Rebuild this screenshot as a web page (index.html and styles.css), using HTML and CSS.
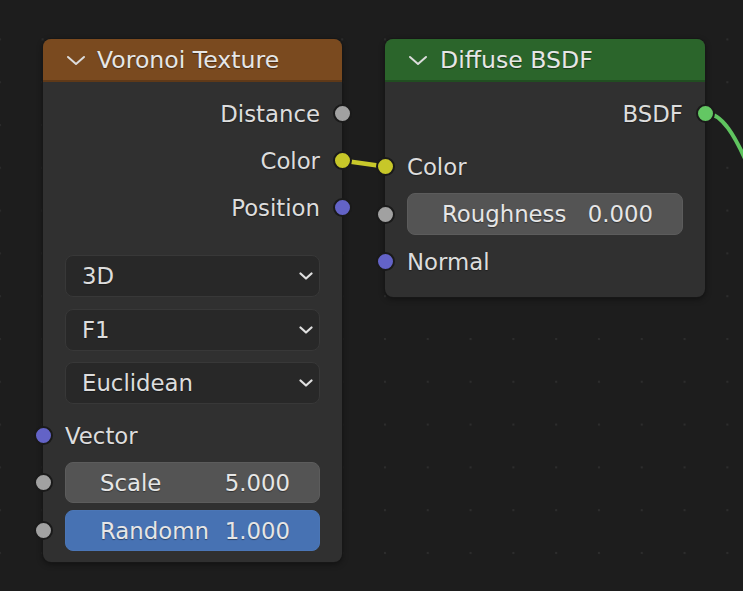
FILE: index.html
```html
<!DOCTYPE html>
<html lang="en">
<head>
<meta charset="utf-8">
<title>Node Editor</title>
<link rel="stylesheet" href="styles.css">
</head>
<body>
<div class="canvas">
  <svg class="links" width="743" height="591" viewBox="0 0 743 591">
    <path d="M342 160.5 L385 166.5" stroke="#c9c92b" stroke-width="4.5" fill="none"/>
    <path d="M705 113 C722 113 735 135 750 170" stroke="#5fc45f" stroke-width="4" fill="none"/>
  </svg>

  <div class="node node-voronoi">
    <div class="node-header header-texture">
      <svg class="hchev" width="20" height="11" viewBox="0 0 20 11"><path d="M2 2 L10 9 L18 2" /></svg>
      <span class="title">Voronoi Texture</span>
    </div>
    <div class="node-body">
      <div class="row out"><span>Distance</span><i class="socket s-float"></i></div>
      <div class="row out"><span>Color</span><i class="socket s-color"></i></div>
      <div class="row out"><span>Position</span><i class="socket s-vector"></i></div>

      <div class="dropdowns">
        <div class="dropdown"><span>3D</span><svg class="dchev" width="14" height="8" viewBox="0 0 14 8"><path d="M1.5 1.5 L7 6.5 L12.5 1.5"/></svg></div>
        <div class="dropdown"><span>F1</span><svg class="dchev" width="14" height="8" viewBox="0 0 14 8"><path d="M1.5 1.5 L7 6.5 L12.5 1.5"/></svg></div>
        <div class="dropdown"><span>Euclidean</span><svg class="dchev" width="14" height="8" viewBox="0 0 14 8"><path d="M1.5 1.5 L7 6.5 L12.5 1.5"/></svg></div>
      </div>

      <div class="row in vector-row"><i class="socket s-vector"></i><span>Vector</span></div>
      <div class="field-row first-field"><i class="socket s-float"></i><div class="field"><span>Scale</span><span>5.000</span></div></div>
      <div class="field-row second-field"><i class="socket s-float"></i><div class="field active"><span>Randomn</span><span>1.000</span></div></div>
    </div>
  </div>

  <div class="node node-diffuse">
    <div class="node-header header-shader">
      <svg class="hchev" width="20" height="11" viewBox="0 0 20 11"><path d="M2 2 L10 9 L18 2" /></svg>
      <span class="title">Diffuse BSDF</span>
    </div>
    <div class="node-body">
      <div class="row out"><span>BSDF</span><i class="socket s-shader"></i></div>
      <div class="row in color-in"><i class="socket s-color"></i><span>Color</span></div>
      <div class="field-row rough-field"><i class="socket s-float"></i><div class="field"><span>Roughness</span><span>0.000</span></div></div>
      <div class="row in normal-row"><i class="socket s-vector"></i><span>Normal</span></div>
    </div>
  </div>
</div>
</body>
</html>
```

FILE: styles.css
```css
html, body {
  margin: 0;
  padding: 0;
  background: #1d1d1d;
}

.canvas {
  position: relative;
  width: 743px;
  height: 591px;
  overflow: hidden;
  background-color: #1d1d1d;
  background-image: radial-gradient(circle at 1px 1px, #2d2d2d 0, #2d2d2d 1.1px, transparent 1.6px);
  background-size: 42.8px 42.8px;
  background-position: 41.6px 38.4px;
  font-family: "DejaVu Sans", "Liberation Sans", sans-serif;
  font-size: 22.8px;
  color: #dddddd;
}

.links {
  position: absolute;
  left: 0;
  top: 0;
  z-index: 0;
}

.node {
  position: absolute;
  z-index: 1;
  background: #303030;
  border-radius: 8px;
  box-shadow: 0 0 0 1px #171717, 0 2px 6px rgba(0, 0, 0, 0.45);
  display: flex;
  flex-direction: column;
}

.node-voronoi {
  left: 43px;
  top: 39px;
  width: 299px;
  height: 523px;
}

.node-diffuse {
  left: 385px;
  top: 39px;
  width: 320px;
  height: 258px;
}

.node-header {
  height: 41px;
  border-bottom: 2px solid rgba(0, 0, 0, 0.22);
  border-radius: 8px 8px 0 0;
  display: flex;
  align-items: center;
  padding-left: 23px;
  gap: 11px;
  font-size: 23.6px;
  color: #e6e6e6;
  text-shadow: 0 1px 1px rgba(0, 0, 0, 0.45);
}

.header-texture {
  background: #7a4a1f;
}

.header-shader {
  background: #2b652b;
}

.header-shader .title {
  margin-left: 1px;
}

.hchev {
  flex: none;
  margin-top: 1px;
}

.hchev path {
  fill: none;
  stroke: #dcdcdc;
  stroke-width: 2;
  stroke-linecap: round;
  stroke-linejoin: round;
}

.node-body {
  display: flex;
  flex-direction: column;
  padding-top: 8px;
}

.row {
  position: relative;
  height: 47px;
  display: flex;
  align-items: center;
  padding: 0 22px;
  text-shadow: 0 1px 1px rgba(0, 0, 0, 0.35);
}

.row.out {
  justify-content: flex-end;
}

.socket {
  position: absolute;
  top: 50%;
  width: 15px;
  height: 15px;
  margin-top: -9.5px;
  border: 2px solid #1a1a1a;
  border-radius: 50%;
  z-index: 2;
}

.row.out .socket {
  right: -9.5px;
}

.row.in .socket,
.field-row .socket {
  left: -9.5px;
}

.s-float { background: #a1a1a1; }
.s-color { background: #c7c729; }
.s-vector { background: #6363c7; }
.s-shader { background: #63c763; }

.dropdowns {
  display: flex;
  flex-direction: column;
  gap: 11.5px;
  margin: 24px 22px 0;
}

.dropdown {
  height: 42px;
  box-sizing: border-box;
  background: #282828;
  border: 1px solid #383838;
  border-radius: 8px;
  display: flex;
  align-items: center;
  justify-content: space-between;
  padding: 0 6px 0 16px;
  text-shadow: 0 1px 1px rgba(0, 0, 0, 0.35);
}

.dchev path {
  fill: none;
  stroke: #e0e0e0;
  stroke-width: 2.2;
  stroke-linecap: round;
  stroke-linejoin: round;
}

.vector-row {
  margin-top: 8px;
}

.field-row {
  position: relative;
  padding: 0 22px;
}

.first-field {
  margin-top: 3px;
}

.second-field {
  margin-top: 7px;
}

.field {
  height: 41px;
  box-sizing: border-box;
  background: #545454;
  border: 1px solid #5c5c5c;
  border-radius: 8px;
  display: flex;
  align-items: center;
  justify-content: space-between;
  padding: 0 29px 0 34px;
  color: #e6e6e6;
  text-shadow: 0 1px 1px rgba(0, 0, 0, 0.4);
}

.field.active {
  background: #4772b3;
  border-color: #4b76b6;
}

.color-in {
  margin-top: 6px;
}

.rough-field {
  margin-top: 3px;
}

.rough-field .field {
  height: 42px;
  padding-left: 34px;
}

.normal-row {
  margin-top: 3px;
}
```
